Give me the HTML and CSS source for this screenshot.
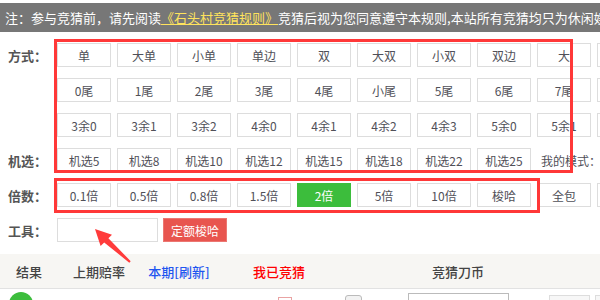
FILE: index.html
```html
<!DOCTYPE html>
<html lang="zh-CN">

<head>
    <meta charset="UTF-8">
    <meta name="viewport" content="width=device-width, initial-scale=1.0">
    <title>竞猜</title>
    <link rel="stylesheet" href="styles.css">
</head>

<body>
    <div class="page">

        <div class="notice">
            注：参与竞猜前，请先阅读<a href="#" class="rule-link">《石头村竞猜规则》</a>竞猜后视为您同意遵守本规则,本站所有竞猜均只为休闲娱乐，请勿用于其他用途
        </div>

        <section class="panel">
            <div class="row">
                <span class="label">方式：</span>
                <div class="opts">
                    <button class="opt">单</button>
                    <button class="opt">大单</button>
                    <button class="opt">小单</button>
                    <button class="opt">单边</button>
                    <button class="opt">双</button>
                    <button class="opt">大双</button>
                    <button class="opt">小双</button>
                    <button class="opt">双边</button>
                    <button class="opt">大</button>
                    <button class="opt">小</button>
                </div>
            </div>
            <div class="row">
                <span class="label"></span>
                <div class="opts">
                    <button class="opt">0尾</button>
                    <button class="opt">1尾</button>
                    <button class="opt">2尾</button>
                    <button class="opt">3尾</button>
                    <button class="opt">4尾</button>
                    <button class="opt">小尾</button>
                    <button class="opt">5尾</button>
                    <button class="opt">6尾</button>
                    <button class="opt">7尾</button>
                    <button class="opt">8尾</button>
                </div>
            </div>
            <div class="row">
                <span class="label"></span>
                <div class="opts">
                    <button class="opt">3余0</button>
                    <button class="opt">3余1</button>
                    <button class="opt">3余2</button>
                    <button class="opt">4余0</button>
                    <button class="opt">4余1</button>
                    <button class="opt">4余2</button>
                    <button class="opt">4余3</button>
                    <button class="opt">5余0</button>
                    <button class="opt">5余1</button>
                    <button class="opt">5余2</button>
                </div>
            </div>
            <div class="row">
                <span class="label">机选：</span>
                <div class="opts">
                    <button class="opt">机选5</button>
                    <button class="opt">机选8</button>
                    <button class="opt">机选10</button>
                    <button class="opt">机选12</button>
                    <button class="opt">机选15</button>
                    <button class="opt">机选18</button>
                    <button class="opt">机选22</button>
                    <button class="opt">机选25</button>
                    <span class="my-mode">我的模式：</span>
                    <select class="mode-select"><option>请选择</option></select>
                </div>
            </div>
            <div class="row">
                <span class="label">倍数：</span>
                <div class="opts">
                    <button class="opt">0.1倍</button>
                    <button class="opt">0.5倍</button>
                    <button class="opt">0.8倍</button>
                    <button class="opt">1.5倍</button>
                    <button class="opt active">2倍</button>
                    <button class="opt">5倍</button>
                    <button class="opt">10倍</button>
                    <button class="opt">梭哈</button>
                    <button class="opt">全包</button>
                    <button class="opt">反选</button>
                </div>
            </div>
            <div class="row">
                <span class="label">工具：</span>
                <div class="opts tools">
                    <input type="text" class="amount">
                    <button class="fixed-btn">定额梭哈</button>
                </div>
            </div>
        </section>

        <div class="tabs">
            <span>结果</span>
            <span>上期赔率</span>
            <span class="tab-blue">本期[刷新]</span>
            <span class="tab-red">我已竞猜</span>
            <span>竞猜刀币</span>
            <span></span>
        </div>

        <div class="list-row">
            <span class="ball"></span>
            <span class="mini-icon"></span>
            <span class="step-box"></span>
            <input type="text" class="coin-input">
            <span class="small-box"></span>
            <span class="small-box"></span>
        </div>

        <!-- annotation marks drawn over the screenshot -->
        <div class="mark mark-a"></div>
        <div class="mark mark-b"></div>
        <svg class="arrow" width="50" height="45" viewBox="0 0 50 45">
            <polygon points="10,7 27,12.7 23.4,16.2 45.7,39.3 44.3,40.7 19.2,20.4 15.6,24" fill="#ff3b3b" />
        </svg>

    </div>
</body>

</html>
```

FILE: styles.css
```css
:root {
    --text: #505058;
    --line: #ddd;
    --mark: #ff3838;
    --green: #3cbd3c;
    --red-btn: #e8554f;
}

* {
    margin: 0;
    padding: 0;
    box-sizing: border-box;
    font-family: "Noto Sans CJK SC", "Liberation Sans", sans-serif;
}

body {
    background-color: #fff;
    color: var(--text);
}

.page {
    position: relative;
    width: 600px;
    height: 300px;
    overflow: hidden;
}

.notice {
    margin-top: 3px;
    height: 29px;
    line-height: 29px;
    padding-left: 5px;
    background-color: #777;
    color: #fff;
    font-size: 13px;
    white-space: nowrap;
    overflow: hidden;
}

.rule-link {
    color: #ffe35c;
    text-decoration: underline;
}

.panel {
    display: flex;
    flex-direction: column;
    gap: 11px;
    padding: 11px 0 12px;
}

.row {
    display: flex;
    height: 24px;
    align-items: center;
}

.label {
    flex: 0 0 57px;
    padding-left: 8px;
    font-size: 13px;
    font-weight: bold;
    color: #555;
}

.opts {
    display: flex;
    align-items: center;
    gap: 6px;
    white-space: nowrap;
}

.opt {
    flex: 0 0 54px;
    height: 24px;
    border: 1px solid var(--line);
    background-color: #fff;
    color: var(--text);
    font-size: 12px;
}

.opt.active {
    background-color: var(--green);
    border-color: var(--green);
    color: #fff;
}

.my-mode {
    margin-left: 4px;
    font-size: 12px;
    color: var(--text);
}

.mode-select {
    flex: 0 0 80px;
    height: 24px;
    margin-left: 2px;
    border: 1px solid #aaa;
    background: #fff;
    font-size: 12px;
}

.tools {
    gap: 5px;
}

.amount {
    width: 101px;
    height: 24px;
    border: 1px solid var(--line);
    outline: none;
}

.fixed-btn {
    width: 64px;
    height: 24px;
    border: 1px solid #ec7772;
    background-color: var(--red-btn);
    color: #fff;
    font-size: 12px;
}

.tabs {
    display: grid;
    grid-template-columns: 58px 82px 78px 122px 236px 1fr;
    height: 35px;
    align-items: center;
    background-color: #f7f6f3;
    border-bottom: 1px solid #e2e2e2;
    font-size: 13px;
    font-weight: 500;
    color: #444;
    text-align: center;
}

.tab-blue {
    color: #1f55f0;
}

.tab-red {
    color: #f00;
}

.list-row {
    display: flex;
    align-items: flex-start;
}

.ball {
    flex: 0 0 24px;
    height: 24px;
    margin: 3px 0 0 9px;
    border-radius: 50%;
    background-color: var(--green);
}

.mini-icon {
    flex: 0 0 14px;
    height: 12px;
    margin: 8px 0 0 245px;
    border: 1px solid #e9a3a3;
}

.step-box {
    flex: 0 0 17px;
    height: 16px;
    margin: 6px 0 0 53px;
    border: 1px solid #bbb;
    border-radius: 3px;
    background-color: #f2f2f2;
}

.coin-input {
    width: 101px;
    height: 24px;
    margin: 4px 0 0 46px;
    border: 1px solid #bbb;
}

.small-box {
    flex: 0 0 41px;
    height: 24px;
    margin: 6px 0 0 40px;
    border: 1px solid var(--line);
    background-color: #f7f7f7;
}

.small-box + .small-box {
    margin-left: 5px;
}

/* red annotation rectangles and arrow, they sit over the form */
.mark {
    position: absolute;
    border: 3px solid var(--mark);
}

.mark-a {
    left: 54px;
    top: 39px;
    width: 519px;
    height: 134px;
}

.mark-b {
    left: 54px;
    top: 178px;
    width: 486px;
    height: 35px;
}

.arrow {
    position: absolute;
    left: 85px;
    top: 222px;
}
```
